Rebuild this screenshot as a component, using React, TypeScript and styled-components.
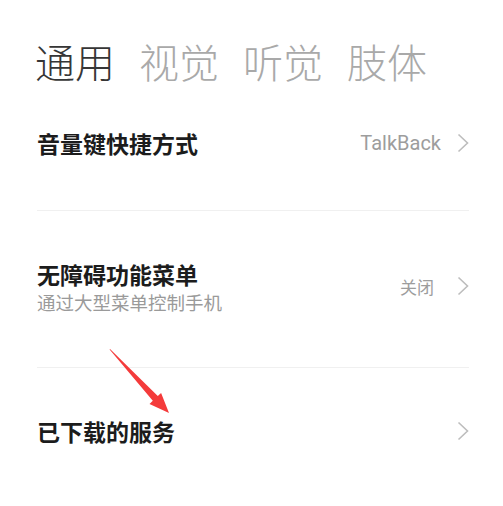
import React from 'react';
import styled, { createGlobalStyle } from 'styled-components';

const GlobalStyle = createGlobalStyle`
    html, body {
        margin: 0;
        padding: 0;
        background: #ffffff;
    }
    body {
        font-family: "Noto Sans CJK SC", "Noto Sans", sans-serif;
    }
`;

const Page = styled.div`
    position: relative;
    width: 503px;
    height: 506px;
    padding: 41px 34px 0 37px;
    box-sizing: border-box;
    overflow: hidden;
`;

const Tabs = styled.div`
    display: flex;
    gap: 24px;
    margin-left: -2px;
`;

const Tab = styled.div<{ $active?: boolean }>`
    font-size: 40px;
    line-height: 40px;
    font-weight: 300;
    color: ${p => p.$active ? '#363636' : '#a9a9a9'};
`;

const Item = styled.div<{ $height: number; $last?: boolean }>`
    display: flex;
    align-items: center;
    height: ${p => p.$height}px;
    padding-bottom: 6px;
    box-sizing: border-box;
    border-bottom: ${p => p.$last ? 'none' : '1px solid #f0f0f0'};
`;

const Texts = styled.div`
    flex: 1;
    display: flex;
    flex-direction: column;
`;

const Title = styled.div`
    font-size: 23px;
    line-height: 32px;
    font-weight: 700;
    color: #1c1c1c;
`;

const Subtitle = styled.div`
    font-size: 18.5px;
    line-height: 25px;
    color: #9a9a9a;
`;

const Value = styled.div<{ $size: number; $gap: number }>`
    font-family: Roboto, "Noto Sans CJK SC", sans-serif;
    font-size: ${p => p.$size}px;
    color: #9d9d9d;
    margin-right: ${p => p.$gap}px;
`;

const ArrowOverlay = styled.svg`
    position: absolute;
    left: 0;
    top: 0;
    pointer-events: none;
`;

const Chevron = () => (
    <svg width="12" height="20" viewBox="0 0 12 20">
        <polyline points="1.5,1.5 10.5,10 1.5,18.5" fill="none" stroke="#bdbdbd" strokeWidth="1.6" strokeLinejoin="miter" />
    </svg>
);

export default function App() {
    return <>
        <GlobalStyle />
        <Page>
            <Tabs>
                <Tab $active>通用</Tab>
                <Tab>视觉</Tab>
                <Tab>听觉</Tab>
                <Tab>肢体</Tab>
            </Tabs>
            <Item $height={130}>
                <Texts>
                    <Title>音量键快捷方式</Title>
                </Texts>
                <Value $size={20} $gap={16}>TalkBack</Value>
                <Chevron />
            </Item>
            <Item $height={157}>
                <Texts>
                    <Title>无障碍功能菜单</Title>
                    <Subtitle>通过大型菜单控制手机</Subtitle>
                </Texts>
                <Value $size={17} $gap={23}>关闭</Value>
                <Chevron />
            </Item>
            <Item $height={132} $last>
                <Texts>
                    <Title>已下载的服务</Title>
                </Texts>
                <Chevron />
            </Item>
            <ArrowOverlay width="503" height="506" viewBox="0 0 503 506">
                <polygon
                    points="110,349 157.8,396 161.1,392.9 169,413 149.5,403.9 152.8,400.8 109.6,349.6"
                    fill="#f43b3b"
                />
            </ArrowOverlay>
        </Page>
    </>;
}
